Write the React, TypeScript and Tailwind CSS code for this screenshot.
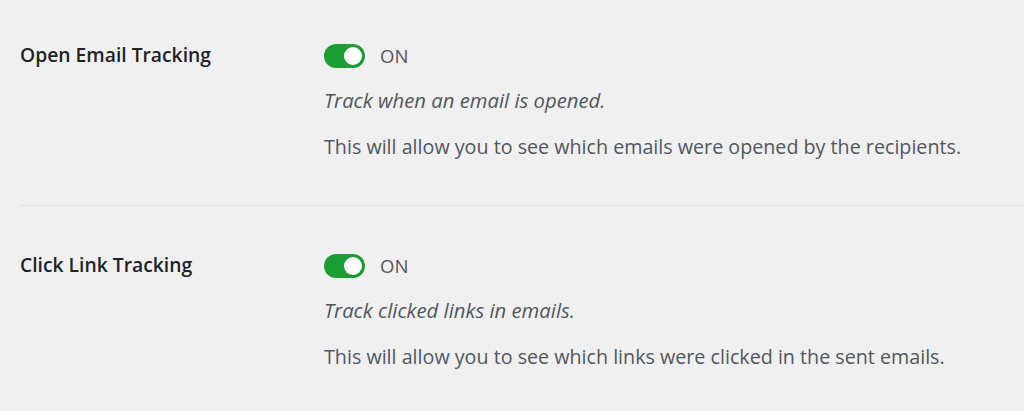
export default function App() {
  const rows = [
    {
      label: "Open Email Tracking",
      italic: "Track when an email is opened.",
      desc: "This will allow you to see which emails were opened by the recipients.",
    },
    {
      label: "Click Link Tracking",
      italic: "Track clicked links in emails.",
      desc: "This will allow you to see which links were clicked in the sent emails.",
    },
  ];
  return (
    <div
      className="w-[1024px] h-[411px] bg-[#f0f0f1] overflow-hidden"
      style={{ fontFamily: '"Open Sans", "Noto Sans", sans-serif' }}
    >
      {rows.map((r, i) => (
        <div
          key={i}
          className={`flex ml-[20px] ${i === 0 ? "pt-[42px] pb-[45px] border-b border-[#e2e2e3]" : "pt-[46px]"}`}
        >
          <div className="w-[304px] shrink-0 text-[19.3px] font-semibold text-[#1d2327] leading-[24px] pt-[1px]">
            {r.label}
          </div>
          <div className="flex flex-col">
            <div className="flex items-center gap-[15px] h-[28px]">
              <div className="w-[41px] h-[24px] rounded-full bg-[#1a9e34] flex items-center justify-end pr-[3px]">
                <div className="w-[18px] h-[18px] rounded-full bg-white" />
              </div>
              <span className="text-[18.5px] text-[#50575e]">ON</span>
            </div>
            <div className="mt-[17px] text-[20.3px] italic text-[#50575e] leading-[26px]">
              {r.italic}
            </div>
            <div className="mt-[21px] text-[19.7px] text-[#50575e] leading-[26px]">{r.desc}</div>
          </div>
        </div>
      ))}
    </div>
  );
}
